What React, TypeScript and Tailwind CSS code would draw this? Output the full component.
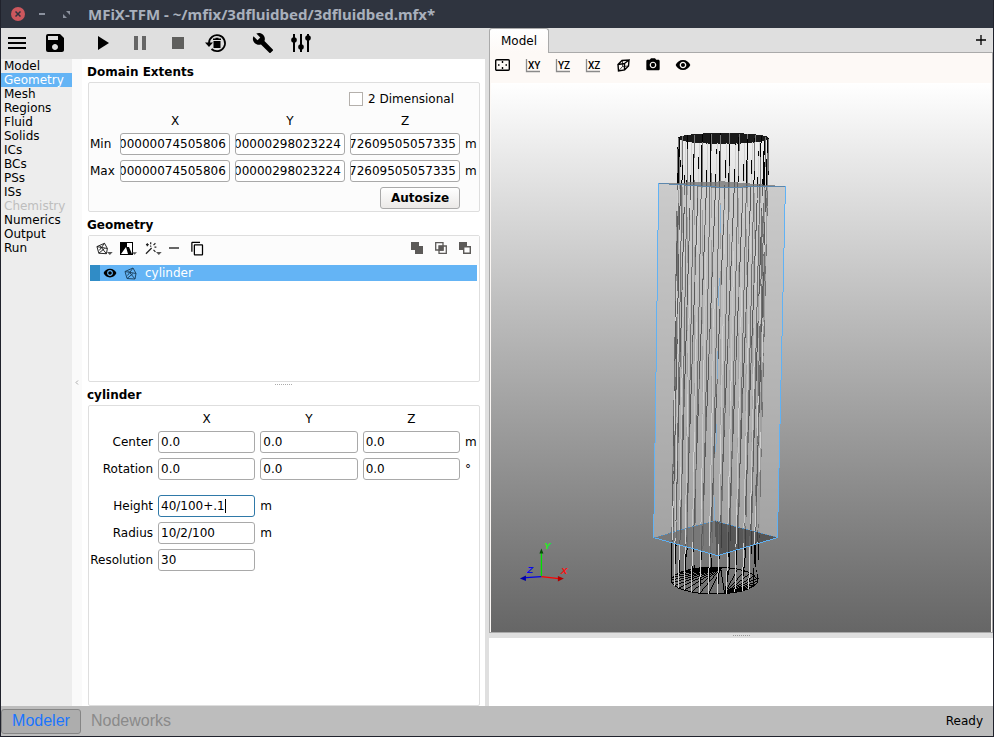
import type { ReactNode } from "react";
import {
  MdBuild,
  MdContentCopy,
  MdMenu,
  MdPause,
  MdPhotoCamera,
  MdPlayArrow,
  MdRemoveRedEye,
  MdSave,
  MdStop,
} from "react-icons/md";

const sections = [
  "Model", "Geometry", "Mesh", "Regions", "Fluid", "Solids", "ICs",
  "BCs", "PSs", "ISs", "Chemistry", "Numerics", "Output", "Run",
];

const field =
  "h-[22px] w-full min-w-0 rounded-[3px] border bg-white text-black outline-none";

function ToolButton({ label, className = "", children }: { label: string; className?: string; children: ReactNode }) {
  return (
    <button type="button" aria-label={label} className={`flex shrink-0 items-center justify-center ${className}`}>
      {children}
    </button>
  );
}

function Heading({ children }: { children: ReactNode }) {
  return <h2 className="flex h-[23px] shrink-0 items-center pt-[3px] font-bold">{children}</h2>;
}

function ExtentRow({ label, values }: { label: string; values: string[] }) {
  return (
    <>
      <span>{label}</span>
      {values.map((v, i) => (
        <input
          key={i}
          aria-label={`${label} ${"XYZ"[i]}`}
          defaultValue={v}
          ref={(el) => {
            if (el) el.scrollLeft = el.scrollWidth;
          }}
          className={`${field} border-[#a9a9a9] pr-[3px]`}
        />
      ))}
      <span>m</span>
    </>
  );
}

function VectorRow({ label, unit }: { label: string; unit: string }) {
  return (
    <>
      <span className="text-right">{label}</span>
      {["X", "Y", "Z"].map((axis) => (
        <input key={axis} aria-label={`${label} ${axis}`} defaultValue="0.0" className={`${field} border-[#a9a9a9] px-[2px]`} />
      ))}
      <span>{unit}</span>
    </>
  );
}

function AxisLetters() {
  return (
    <>
      <span />
      <span className="text-center">X</span>
      <span className="text-center">Y</span>
      <span className="text-center">Z</span>
      <span />
    </>
  );
}

function MeshIcon({ color = "#1a1a1a" }: { color?: string }) {
  return (
    <svg width="13" height="13" viewBox="0 0 13 13" fill="none" stroke={color} strokeWidth="1" aria-hidden="true">
      <path d="M1 4.500 9 1 12 6.500 11 12 3 11.500ZM1 4.500 12 6.500M3 11.500 9 6.500M4.500 4 11 12M9 1 3.500 8.500" />
    </svg>
  );
}

function Caret() {
  return (
    <svg width="6" height="3" viewBox="0 0 6 3" className="mt-[11px] -ml-px" aria-hidden="true">
      <path d="M0 0H6L3 3Z" fill="#555" />
    </svg>
  );
}

function PlaneIcon({ text }: { text: string }) {
  return (
    <svg width="18" height="15" viewBox="0 0 18 15" aria-hidden="true">
      <path d="M2.500 1V13.500H16" fill="none" stroke="#8a8a8a" strokeWidth="1.300" />
      <text x="4" y="11" fontSize="10" fontFamily="Roboto, sans-serif" fontWeight="500">{text}</text>
    </svg>
  );
}

const SIDES = 30;
const ring = (cx: number, cy: number, rx: number, ry: number) =>
  Array.from({ length: SIDES }, (_, i) => {
    const a = ((i * 12 + 2) * Math.PI) / 180;
    return [cx + rx * Math.cos(a), cy + ry * Math.sin(a)];
  });
const topRing = ring(724, 138, 45.5, 5);
const bottomRing = ring(715, 581, 43.5, 13.5);
const toPoints = (r: number[][]) => r.map((p) => p.join(",")).join(" ");

function Scene() {
  const isFront = (i: number) => i >= 1 && i <= 14;
  const all = topRing.map((_, i) => i);
  const front = all.filter(isFront);
  const wall = (i: number, j: number, color: string, width = 1, dash?: string) => (
    <line
      key={i}
      x1={topRing[i][0]} y1={topRing[i][1]}
      x2={bottomRing[j][0]} y2={bottomRing[j][1]}
      stroke={color} strokeWidth={width} strokeDasharray={dash} strokeDashoffset={i * 37}
    />
  );
  return (
    <svg viewBox="491 83 501 549" className="h-full w-full" role="img" aria-label="Wireframe cylinder inside the domain box">
      <g shapeRendering="crispEdges">
        <polygon points={toPoints(topRing)} fill="#1a1a1a" stroke="#1a1a1a" />
        <g>{all.map((i) => wall(i, i, "#000"))}</g>
        <g>{all.map((i) => wall(i, (i + 1) % SIDES, isFront(i) ? "#000" : "#777", 1, isFront(i) ? undefined : "46 22"))}</g>
        <polygon points={toPoints(bottomRing)} fill="none" stroke="#000" />
        {all.map((i) => {
          const [x, y] = bottomRing[i];
          const left = x < 716;
          return <line key={i} x1={x} y1={y} x2={left ? 722 : 725} y2={left ? 568 : 594} stroke="#000" />;
        })}
        <g>{front.filter((i) => i > 2 && i < 14).map((i) => wall(i, i, "#d4d4d4"))}</g>
        <polygon points="654,538 715,521 778,538 718,556" fill="#4c4c4c" fillOpacity="0.8" />
        <polygon points="654,538 715,521 717,556" fill="#999" fillOpacity="0.5" />
        <polygon points="659,183 724,181 786,186 722,188" fill="#777" fillOpacity="0.8" />
        <polygon points="659,183 722,188 786,186 778,538 715,521 654,538" fill="#bdbdbd" fillOpacity="0.6" />
        <g clipPath="url(#inBox)">
          <g>{front.map((i) => wall(i, i + 1, "#5a5a5a", 1, "60 25"))}</g>
          <g>{front.map((i) => wall(i, i, "#d0d0d0", 1, "40 70"))}</g>
        </g>
        <clipPath id="inBox"><polygon points="659,183 722,188 786,186 778,538 718,556 654,538" /></clipPath>
        <polyline points="659,183 654,538 718,556 778,538 786,186" fill="none" stroke="#5fb2f5" />
        <polyline points="654,538 715,521 778,538" fill="none" stroke="#4f8fc4" strokeDasharray="2 2" />
        <polyline points="659,183 722,187 786,186" fill="none" stroke="#5b87ad" />
        <line x1="721" y1="205" x2="715" y2="520" stroke="#84add0" strokeDasharray="28 45" />
      </g>
      <g strokeWidth="1.300">
        <path d="M541.500 577V552" stroke="#00e000" />
        <path d="M541.500 577 526 578" stroke="#0000e8" />
        <path d="M541.500 577 559 579" stroke="#f00" />
        <path d="M539.500 554 541.500 549 543.500 554Z" fill="#084f08" />
        <path d="M520 579 526 576V581.500Z" fill="#0000a8" />
        <path d="M564 579 558 576.500V582Z" fill="#b00000" />
      </g>
      <g fontFamily="Liberation Sans, sans-serif" fontStyle="italic" fontWeight="700" fontSize="10">
        <text x="544" y="549" fill="#21f021">Y</text>
        <text x="527" y="573" fill="#0909ee">Z</text>
        <text x="561" y="574" fill="#fa1111">X</text>
      </g>
    </svg>
  );
}

export default function App() {
  return (
    <div className="flex h-screen w-full flex-col overflow-hidden border-x border-b border-[#20222c] bg-[#dfdfdf] font-['DejaVu_Sans',sans-serif] text-[12px] leading-[14px] text-black">
      <header className="flex h-7 shrink-0 items-center bg-[#2f343f] pl-[10px]">
        <button type="button" aria-label="Close" className="flex size-[14px] items-center justify-center rounded-full bg-[#cc575d]">
          <svg width="6" height="6" viewBox="0 0 6 6" stroke="#2f343f" strokeWidth="1.500"><path d="M.5.5 5.500 5.500M5.500.5.5 5.500" /></svg>
        </button>
        <button type="button" aria-label="Minimize" className="ml-[14px] h-[2px] w-[6px] bg-[#8b919e]" />
        <button type="button" aria-label="Maximize" className="ml-[18px]">
          <svg width="7" height="7" viewBox="0 0 7 7" fill="#8b919e"><path d="M3 0H7V4ZM0 3V7H4Z" /></svg>
        </button>
        <h1 className="ml-[18px] font-['Noto_Sans',sans-serif] text-[15px] font-bold leading-5 text-[#a9b0bc]">MFiX-TFM - ~/mfix/3dfluidbed/3dfluidbed.mfx*</h1>
      </header>

      <main className="flex min-h-0 flex-1">
        <section className="flex w-[484px] shrink-0 flex-col">
          <div role="toolbar" className="flex h-[31px] shrink-0 items-center gap-2 pb-[2px] pl-px">
            <ToolButton label="Menu" className="w-[30px]"><MdMenu size={24} /></ToolButton>
            <ToolButton label="Save" className="w-[30px]"><MdSave size={24} /></ToolButton>
            <ToolButton label="Run" className="ml-[9px] w-[30px]"><MdPlayArrow size={24} /></ToolButton>
            <ToolButton label="Pause" className="w-[30px] text-[#666]"><MdPause size={24} /></ToolButton>
            <ToolButton label="Stop" className="w-[30px] text-[#5f5f5d]"><MdStop size={24} /></ToolButton>
            <ToolButton label="Reset" className="w-[30px]">
              <svg width="22" height="20" viewBox="0 0 22 20" aria-hidden="true">
                <path d="M4 10A8 8 0 1 1 6.500 16" fill="none" stroke="#000" strokeWidth="1.800" />
                <path d="M0 9.500H8L4 14Z" />
                <path d="M8.500 8H15.500V15H8.500ZM8 5.500H10.500V4.700H13.500V5.500H16V7H8Z" />
              </svg>
            </ToolButton>
            <ToolButton label="Build" className="ml-[9px] w-[30px]"><MdBuild size={22} /></ToolButton>
            <ToolButton label="Parameters" className="w-[30px]">
              <svg width="20" height="20" viewBox="0 0 20 20" stroke="#000" strokeWidth="2" aria-hidden="true">
                <path d="M3 1V19M10 1V19M17 1V19" />
                <g stroke="none"><circle cx="3" cy="7" r="2.800" /><circle cx="10" cy="14" r="2.800" /><circle cx="17" cy="5" r="2.800" /></g>
              </svg>
            </ToolButton>
          </div>

          <div className="flex min-h-0 flex-1">
            <nav className="flex w-[71px] shrink-0 flex-col bg-[#ededed]">
              {sections.map((s) => (
                <button
                  key={s}
                  type="button"
                  disabled={s === "Chemistry"}
                  className={`h-[14px] pl-[3px] text-left ${s === "Geometry" ? "bg-[#64b4f5] text-white" : s === "Chemistry" ? "text-[#bebebe]" : ""}`}
                >
                  {s}
                </button>
              ))}
            </nav>
            <button type="button" aria-label="Collapse sidebar" className="flex w-[10px] shrink-0 items-center justify-center bg-[#fafafa]">
              <svg width="4" height="5" viewBox="0 0 4 5" fill="none" stroke="#aaa"><path d="M3 .5 1 2.500 3 4.500" /></svg>
            </button>

            <div className="flex min-w-0 flex-1 flex-col bg-white px-[5px]">
              <Heading>Domain Extents</Heading>
              <div className="ml-px shrink-0 rounded-[2px] border border-[#dedede] bg-[#fcfcfc] pt-1 pb-[2px] pl-px">
                <label className="flex h-[23px] items-center justify-end gap-[5px] pr-[25px]">
                  <input type="checkbox" className="size-[14px] appearance-none border border-[#b4b0ac] bg-white" />
                  2 Dimensional
                </label>
                <div className="grid grid-cols-[25px_1fr_1fr_1fr_14px] items-center gap-x-[5px] gap-y-[5px]">
                  <div className="col-span-5 -mb-[5px] grid h-[23px] grid-cols-subgrid items-center pb-[2px]"><AxisLetters /></div>
                  <ExtentRow label="Min" values={["00000074505806", "00000298023224", "72609505057335"]} />
                  <ExtentRow label="Max" values={["00000074505806", "00000298023224", "72609505057335"]} />
                  <button type="button" className="col-start-4 h-[22px] w-20 justify-self-end rounded-[3px] border border-[#a9a9a9] bg-linear-to-b from-white to-[#ebe9e7] font-bold">Autosize</button>
                </div>
              </div>

              <Heading>Geometry</Heading>
              <div className="ml-px h-[147px] shrink-0 rounded-[2px] border border-[#dedede] bg-white">
                <div role="toolbar" className="flex h-[29px] items-center bg-[#fcfcfc] px-[7px] pb-[5px]">
                  <ToolButton label="Add geometry" className="w-[17px]"><MeshIcon /><Caret /></ToolButton>
                  <ToolButton label="Add implicit" className="ml-[7px] w-[17px]">
                    <svg width="13" height="13" viewBox="0 0 13 13" className="shrink-0" aria-hidden="true"><path d="M0 0H13V13H0Z" /><path d="M7 1H12V12L9 5H7ZM1 12 6 5 8 12Z" fill="#fff" /></svg>
                    <Caret />
                  </ToolButton>
                  <ToolButton label="Filters" className="ml-2 w-[17px]">
                    <svg width="13" height="13" viewBox="0 0 13 13" stroke="#222" strokeWidth="1.300" fill="none" aria-hidden="true"><path d="M1 12 7 6M2.500 1V4M1 2.500H4M6 0V2M11 1 9 3M10 5H12M5.500 3.500 6.500 4.500M9 8 11 10" /></svg>
                    <Caret />
                  </ToolButton>
                  <ToolButton label="Remove" className="ml-[3px] w-[17px]"><span className="h-[2px] w-[10px] bg-[#666]" /></ToolButton>
                  <ToolButton label="Copy" className="ml-[7px] w-[17px]"><MdContentCopy size={15} /></ToolButton>
                  <ToolButton label="Union" className="ml-auto w-4 text-[#5c5a58]">
                    <svg width="12" height="12" viewBox="0 0 12 12" fill="currentColor"><path d="M0 0H8V4H12V12H4V8H0Z" /></svg>
                  </ToolButton>
                  <ToolButton label="Intersect" className="ml-2 w-4 text-[#5c5a58]">
                    <svg width="12" height="12" viewBox="0 0 12 12" fill="none" stroke="currentColor" strokeWidth="1.300"><path d="M.7.7H8V8H.7ZM4 4H11.300V11.300H4Z" /><path d="M4.500 4.500H8V8H4.500Z" fill="currentColor" /></svg>
                  </ToolButton>
                  <ToolButton label="Difference" className="ml-2 mr-[-1px] w-4 text-[#5c5a58]">
                    <svg width="12" height="12" viewBox="0 0 12 12" fill="none" stroke="currentColor" strokeWidth="1.400"><path d="M0 0H8V4H4V8H0Z" fill="currentColor" stroke="none" /><path d="M4.700 4.700H11.300V11.300H4.700Z" /></svg>
                  </ToolButton>
                </div>
                <ul className="pr-[2px] pl-px">
                  <li className="flex h-4 items-center bg-[#64b4f5] text-white">
                    <span className="h-full w-[10px] bg-[#308cc6]" />
                    <span className="ml-[3px] text-black"><MdRemoveRedEye size={14} /></span>
                    <span className="mr-2 ml-[7px]"><MeshIcon color="#1f4766" /></span>
                    cylinder
                  </li>
                </ul>
              </div>

              <Heading>
                <span className="flex-1">cylinder</span>
                <span className="mb-[21px] w-[17px] border-b border-dotted border-[#aaa]" />
                <span className="flex-1" />
              </Heading>
              <div className="ml-px min-h-0 flex-1 rounded-[2px] border border-[#dedede] bg-white pl-px">
                <div className="grid grid-cols-[63px_1fr_1fr_1fr_14px] items-center gap-[5px]">
                  <div className="col-span-5 -mb-[5px] grid h-[25px] grid-cols-subgrid items-center"><AxisLetters /></div>
                  <VectorRow label="Center" unit="m" />
                  <VectorRow label="Rotation" unit="°" />
                  <label htmlFor="height" className="mt-[10px] text-right">Height</label>
                  <div className="relative mt-[10px]">
                    <input id="height" defaultValue="40/100+.1" className={`${field} block border-[#2f79a8] px-[2px]`} />
                    <span className="absolute top-1 left-[67px] h-[14px] w-px bg-black" />
                  </div>
                  <span className="col-span-3 mt-[10px]">m</span>
                  <label htmlFor="radius" className="text-right">Radius</label>
                  <input id="radius" defaultValue="10/2/100" className={`${field} border-[#a9a9a9] px-[2px]`} />
                  <span className="col-span-3">m</span>
                  <label htmlFor="resolution" className="text-right">Resolution</label>
                  <input id="resolution" defaultValue="30" className={`${field} border-[#a9a9a9] px-[2px]`} />
                </div>
              </div>
            </div>
          </div>
        </section>

        <section className="ml-1 flex min-w-0 flex-1 flex-col">
          <div role="tablist" className="flex h-[25px] shrink-0 items-stretch">
            <button type="button" role="tab" aria-selected="true" className="w-[60px] rounded-t-[3px] border-x border-t border-[#aaa] bg-linear-to-b from-white to-[#fdf9f6]">Model</button>
            <div className="flex flex-1 items-center justify-end border-b border-[#aaa] pr-[7px]">
              <button type="button" aria-label="New tab">
                <svg width="10" height="10" viewBox="0 0 10 10" stroke="#000" strokeWidth="1.300"><path d="M5 0V10M0 5H10" /></svg>
              </button>
            </div>
          </div>
          <div className="flex min-h-0 flex-1 flex-col border-x border-b border-[#a9a9a9] bg-[#fdf9f6]">
            <div role="toolbar" className="flex h-[30px] shrink-0 items-center gap-[6px] pb-[6px] pl-px">
              <ToolButton label="Reset view" className="w-6">
                <svg width="16" height="12" viewBox="0 0 16 12" fill="none" stroke="#000" strokeWidth="1.400"><rect x=".7" y=".7" width="13.600" height="10.600" rx="1" /><path d="M7.500 2V4M7.500 8V10M3 6H4.500M10.500 6H12" /></svg>
              </ToolButton>
              <ToolButton label="XY view" className="w-6"><PlaneIcon text="XY" /></ToolButton>
              <ToolButton label="YZ view" className="w-6"><PlaneIcon text="YZ" /></ToolButton>
              <ToolButton label="XZ view" className="w-6"><PlaneIcon text="XZ" /></ToolButton>
              <ToolButton label="Perspective" className="w-6">
                <svg width="13" height="13" viewBox="0 0 13 13" fill="none" stroke="#000" strokeWidth="1.400"><path d="M1 5.500 7.500 4.500V11L1.500 12ZM1 5.500 5 1.500 12 1 7.500 4.500M12 1 11.500 7 7.500 11" /><path d="M1.500 12 5.500 7.500V1.500M5.500 7.500 11.500 7" strokeWidth=".7" /></svg>
              </ToolButton>
              <ToolButton label="Screenshot" className="w-6"><MdPhotoCamera size={16} /></ToolButton>
              <ToolButton label="Visibility" className="w-6"><MdRemoveRedEye size={16} /></ToolButton>
            </div>
            <div className="mx-px min-h-0 flex-1 bg-linear-to-b from-white to-[#666]"><Scene /></div>
          </div>
          <div className="flex h-[5px] shrink-0 items-center justify-center"><span className="w-[17px] border-b border-dotted border-[#999]" /></div>
          <div className="h-[68px] shrink-0 bg-white" />
        </section>
      </main>

      <footer className="flex h-[30px] shrink-0 items-center bg-[#bdbdbd] pr-[10px]">
        <button type="button" className="h-[25px] w-20 rounded-[3px] border border-[#858585] bg-[#adadad] font-['Liberation_Sans',sans-serif] text-[16px] leading-5 text-[#1a75ff]">Modeler</button>
        <button type="button" className="ml-[10px] font-['Liberation_Sans',sans-serif] text-[16px] leading-5 text-[#8a8a8a]">Nodeworks</button>
        <span className="ml-auto">Ready</span>
      </footer>
    </div>
  );
}
